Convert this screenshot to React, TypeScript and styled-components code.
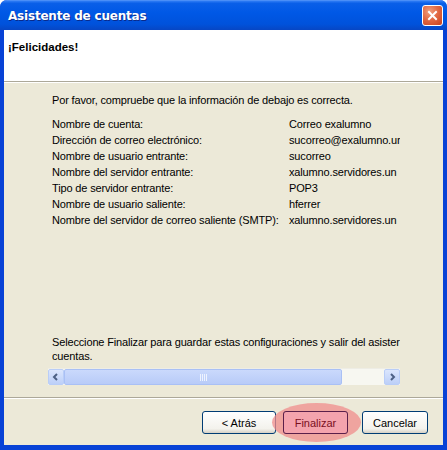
import styled, { createGlobalStyle } from 'styled-components';

const GlobalStyle = createGlobalStyle`
    html, body {
        margin: 0;
        padding: 0;
        background: #ffffff;
    }
    body {
        font-family: Tahoma, "Liberation Sans", Arial, sans-serif;
        font-size: 11px;
    }
`;

// WINDOW

const Window = styled.div`
    width: 447px;
    height: 450px;
    display: flex;
    flex-direction: column;
    background: #0842d6;
    border-radius: 7px 7px 0 0;
    overflow: hidden;
    box-sizing: border-box;
`;

const TitleBar = styled.div`
    height: 30px;
    flex: none;
    display: flex;
    align-items: center;
    justify-content: space-between;
    padding: 0 4px 0 8px;
    background: linear-gradient(to bottom, #2f7cf5 0%, #0a5fe8 8%, #0058e6 40%, #0052db 80%, #0746c4 100%);
    border-top: 1px solid #4a8ef7;
    box-sizing: border-box;
`;

const Title = styled.span`
    color: #ffffff;
    font-family: "DejaVu Sans", sans-serif;
    font-weight: bold;
    font-size: 12px;
    letter-spacing: -0.2px;
    text-shadow: 1px 1px 0 #0a2a8a;
`;

const CloseButton = styled.div`
    width: 21px;
    height: 21px;
    box-sizing: border-box;
    border: 1px solid #ffffff;
    border-radius: 3px;
    background: radial-gradient(circle at 35% 30%, #f0a080 0%, #e26a45 45%, #c8401c 100%);
    display: flex;
    align-items: center;
    justify-content: center;
`;

const Frame = styled.div`
    flex: 1;
    display: flex;
    flex-direction: column;
    margin: 0 4px 5px 4px;
    background: #ece9d8;
`;

const Header = styled.div`
    height: 52px;
    flex: none;
    background: #ffffff;
    padding: 11px 0 0 4px;
    box-sizing: border-box;
    border-bottom: 1px solid #aca899;
    box-shadow: 0 1px 0 #ffffff;
`;

const Heading = styled.div`
    font-family: "Liberation Sans", Arial, sans-serif;
    font-weight: bold;
    font-size: 11.5px;
    color: #000000;
`;

const Body = styled.div`
    flex: 1;
    display: flex;
    flex-direction: column;
    padding: 11px 0 0 48px;
    width: 348px;
    overflow: hidden;
`;

const Text = styled.div`
    font-family: "Liberation Sans", Arial, sans-serif;
    font-size: 11px;
    line-height: 14px;
    letter-spacing: -0.15px;
    color: #000000;
    white-space: nowrap;
`;

const Info = styled.div`
    display: grid;
    grid-template-columns: 237px 1fr;
    row-gap: 2px;
    margin-top: 10px;
`;

const Spacer = styled.div`
    flex: 1;
`;

const ScrollBar = styled.div`
    display: flex;
    height: 17px;
    margin: 5px 0 0 -4px;
    width: 352px;
    background: #f7f7f1;
    border-top: 1px solid #eeede5;
    box-sizing: border-box;
`;

const ArrowButton = styled.div`
    width: 16px;
    height: 16px;
    flex: none;
    box-sizing: border-box;
    border: 1px solid #b9cdf7;
    border-radius: 2px;
    background: linear-gradient(to bottom, #dbe6fd, #bccff8);
    display: flex;
    align-items: center;
    justify-content: center;
`;

const Thumb = styled.div`
    width: 278px;
    flex: none;
    box-sizing: border-box;
    border: 1px solid #a9c0f5;
    border-radius: 2px;
    background: linear-gradient(to bottom, #cad9fc, #b8cbf8);
    display: flex;
    align-items: center;
    justify-content: center;
`;

const Track = styled.div`
    flex: 1;
`;

const Footer = styled.div`
    flex: none;
    height: 48px;
    margin-top: 12px;
    border-top: 1px solid #aca899;
    box-shadow: inset 0 1px 0 #ffffff;
    display: flex;
    justify-content: flex-end;
    align-items: flex-start;
    padding: 13px 15px 0 0;
    box-sizing: border-box;
`;

const Button = styled.div<{ $primary?: boolean; $w: number; $gap: number }>`
    position: relative;
    width: ${p => p.$w}px;
    margin-right: ${p => p.$gap}px;
    height: 23px;
    box-sizing: border-box;
    border: 1px solid #003c74;
    border-radius: 3px;
    background: linear-gradient(to bottom, #ffffff, #f3f2ec 80%, #d6d0c5);
    display: flex;
    align-items: center;
    justify-content: center;
    font-family: "Liberation Sans", Arial, sans-serif;
    font-size: 11px;
    color: ${p => p.$primary ? '#7a0f1e' : '#000000'};
`;

const Highlight = styled.div`
    position: absolute;
    left: -12px;
    top: -9px;
    width: 89px;
    height: 39px;
    border-radius: 50%;
    background: rgba(240, 140, 140, 0.75);
    z-index: 0;
`;

const Label = styled.span`
    position: relative;
    z-index: 1;
`;

const ButtonFace = styled.div`
    position: absolute;
    inset: -1px;
    border: 1px solid #5a1f4a;
    border-radius: 3px;
    background: #f4a3ad;
    z-index: 1;
`;

const rows: [string, string][] = [
    ['Nombre de cuenta:', 'Correo exalumno'],
    ['Dirección de correo electrónico:', 'sucorreo@exalumno.ur'],
    ['Nombre de usuario entrante:', 'sucorreo'],
    ['Nombre del servidor entrante:', 'xalumno.servidores.un'],
    ['Tipo de servidor entrante:', 'POP3'],
    ['Nombre de usuario saliente:', 'hferrer'],
    ['Nombre del servidor de correo saliente (SMTP):', 'xalumno.servidores.un'],
];

const App = () => (
    <>
        <GlobalStyle />
        <Window>
            <TitleBar>
                <Title>Asistente de cuentas</Title>
                <CloseButton>
                    <svg width="11" height="11" viewBox="0 0 11 11">
                        <path d="M2 2 L9 9 M9 2 L2 9" stroke="#ffffff" strokeWidth="2" strokeLinecap="square" />
                    </svg>
                </CloseButton>
            </TitleBar>
            <Frame>
                <Header>
                    <Heading>¡Felicidades!</Heading>
                </Header>
                <Body>
                    <Text>Por favor, compruebe que la información de debajo es correcta.</Text>
                    <Info>
                        {rows.map(([k, v]) => [
                            <Text key={k}>{k}</Text>,
                            <Text key={k + 'v'}>{v}</Text>,
                        ])}
                    </Info>
                    <Spacer />
                    <Text>Seleccione Finalizar para guardar estas configuraciones y salir del asister</Text>
                    <Text>cuentas.</Text>
                    <ScrollBar>
                        <ArrowButton>
                            <svg width="8" height="8" viewBox="0 0 8 8">
                                <path d="M5 1 L2 4 L5 7" stroke="#4d6185" strokeWidth="2" fill="none" />
                            </svg>
                        </ArrowButton>
                        <Thumb>
                            <svg width="8" height="7" viewBox="0 0 8 7">
                                <path d="M1.5 0 V7 M3.5 0 V7 M5.5 0 V7 M7.5 0 V7" stroke="#eef3fe" strokeWidth="1" />
                            </svg>
                        </Thumb>
                        <Track />
                        <ArrowButton>
                            <svg width="8" height="8" viewBox="0 0 8 8">
                                <path d="M3 1 L6 4 L3 7" stroke="#4d6185" strokeWidth="2" fill="none" />
                            </svg>
                        </ArrowButton>
                    </ScrollBar>
                </Body>
                <Footer>
                    <Button $w={74} $gap={7}>&lt; Atrás</Button>
                    <Button $primary $w={65} $gap={14}>
                        <Highlight />
                        <ButtonFace />
                        <Label>Finalizar</Label>
                    </Button>
                    <Button $w={66} $gap={0}>Cancelar</Button>
                </Footer>
            </Frame>
        </Window>
    </>
);

export default App;
